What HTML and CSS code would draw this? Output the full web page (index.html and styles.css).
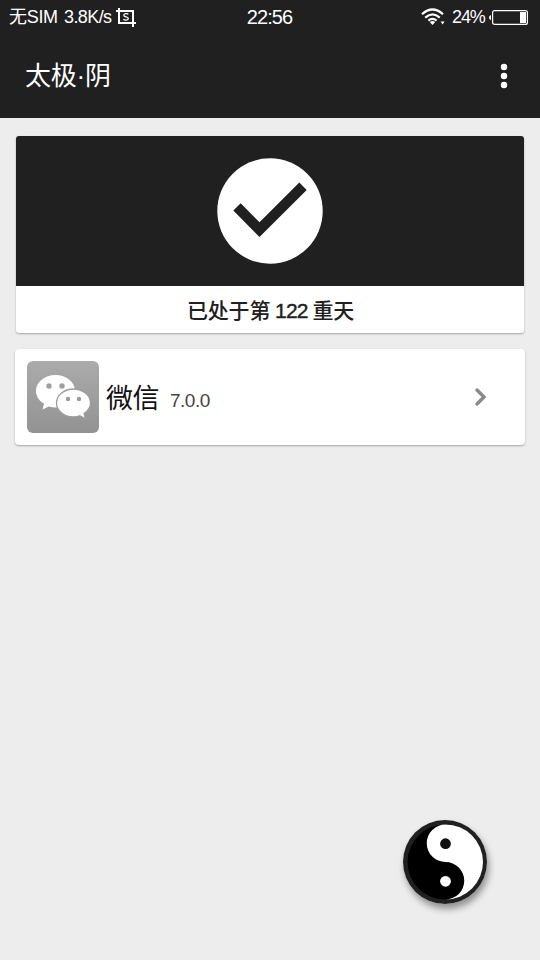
FILE: index.html
```
<!DOCTYPE html>
<html lang="zh-CN">
<head>
<meta charset="utf-8">
<title>太极·阴</title>
<link rel="stylesheet" href="styles.css">
</head>
<body>
<div class="status">
  <div class="status-left">
    <span class="carrier">无SIM</span><span class="speed">3.8K/s</span>
    <svg class="crop" width="20" height="19" viewBox="0 0 20 19" fill="none" stroke="#fff" stroke-width="2"><path d="M0 3H17V19M3 0V15H20"/><path stroke-width="1.3" d="M12.3 6.4C11.5 5.2 7.8 5.2 7.8 7.2C7.8 9.4 12.3 8.3 12.3 10.5C12.3 12.6 8.3 12.5 7.5 11.1"/></svg>
  </div>
  <span class="clock">22:56</span>
  <div class="status-right">
    <svg class="wifi" width="24" height="18" viewBox="0 0 24 18" fill="none" stroke="#fff" stroke-width="2.200"><path d="M1 6.2Q11.5-3.2 22 6.2M4.2 9.6Q11.5 3.2 18.8 9.6M7.4 12.6Q11.5 9.2 15.6 12.6"/><path fill="#fff" stroke="none" d="M8.8 14Q11.5 12.2 14.2 14L11.5 17ZM19.6 13.5h4l-2 3z"/></svg>
    <span class="percent">24%</span>
    <svg class="battery" width="39" height="15" viewBox="0 0 39 15"><path fill="#fff" d="M2 5v5Q0 9.500 0 7.500T2 5zM31 2h6v11h-6z"/><rect x="3.600" y=".6" width="34.800" height="13.800" rx="2" fill="none" stroke="#fff" stroke-width="1.200"/></svg>
  </div>
</div>
<header class="toolbar">
  <h1 class="title">太极·阴</h1>
  <svg width="8" height="26" viewBox="0 0 8 26" fill="#fff"><circle cx="4" cy="4" r="3.200"/><circle cx="4" cy="13" r="3.200"/><circle cx="4" cy="22" r="3.200"/></svg>
</header>
<main class="content">
  <section class="card hero">
    <div class="hero-top">
      <svg width="106" height="106" viewBox="0 0 106 106"><circle cx="53" cy="53" r="52.700" fill="#fff"/><path fill="#202020" d="M16.300 52.500L23.700 45.200L42.500 64.200L82.300 24.500L89.700 32L42.500 79Z"/></svg>
    </div>
    <div class="hero-text">已处于第<span class="count"> 122 </span>重天</div>
  </section>
  <section class="card app">
    <svg class="app-icon" width="72" height="72" viewBox="0 0 72 72">
      <defs><linearGradient id="g" x2="0" y2="1"><stop stop-color="#ababab"/><stop offset="1" stop-color="#929292"/></linearGradient></defs>
      <rect width="72" height="72" rx="6" fill="url(#g)"/>
      <path fill="#fff" d="M28.500 14C39.500 14 48 21 48 30.200S39.500 46.500 28.500 46.500Q25 46.500 21.800 45.500L15.500 48.500L17 42.800C12 39.500 9 35.200 9 30.200C9 21 17.500 14 28.500 14Z"/>
      <circle cx="22" cy="25" r="2.700" fill="#9f9f9f"/><circle cx="35" cy="25" r="2.700" fill="#9f9f9f"/>
      <path fill="#fff" stroke="#9d9d9d" stroke-width="1.300" d="M46.500 28C55.500 28 63.500 34 63.500 42C63.500 46.500 61 49.800 57 52.600L58.600 57.800L52.700 54.800Q49.500 56 46.500 56C37.500 56 29.500 50 29.500 42S37.500 28 46.500 28Z"/>
      <circle cx="41" cy="38" r="2.200" fill="#9b9b9b"/><circle cx="52" cy="38" r="2.200" fill="#9b9b9b"/>
    </svg>
    <span class="app-name">微信</span>
    <span class="app-version">7.0.0</span>
    <svg class="chevron" width="14" height="20" viewBox="0 0 14 20" fill="none" stroke="#8a8a8a" stroke-width="3.400" stroke-linecap="round"><path d="M3 3L10 10L3 17"/></svg>
  </section>
</main>
<div class="fab">
  <svg width="84" height="84" viewBox="0 0 84 84"><circle cx="42" cy="42" r="42" fill="#202020"/><circle cx="42" cy="42" r="37.500" fill="#000"/><path fill="#fff" d="M42.500 4.500A37.500 37.500 0 0 1 42.500 79.500A18.750 18.750 0 0 0 42.500 42A18.750 18.750 0 0 1 42.500 4.500Z"/><circle cx="42.500" cy="23.700" r="5.400" fill="#101010"/><circle cx="42.500" cy="61.300" r="5.400" fill="#fff"/></svg>
</div>
</body>
</html>
```
FILE: styles.css
```
* { box-sizing: border-box; }
body {
  margin: 0;
  width: 540px;
  height: 960px;
  overflow: hidden;
  background: #ededed;
  color: #202020;
  font-family: "Liberation Sans", "Noto Sans CJK SC", sans-serif;
}
svg { display: block; flex: none; }
.status {
  display: grid;
  grid-template-columns: 1fr auto 1fr;
  align-items: center;
  height: 34px;
  padding: 0 12px 0 9px;
  background: #202020;
  color: #fff;
  font-size: 18px;
  line-height: 34px;
  white-space: nowrap;
}
.status-left, .status-right { display: flex; align-items: center; }
.status-right { justify-content: flex-end; }
.carrier { width: 55px; letter-spacing: -0.3px; }
.speed { width: 52px; letter-spacing: -0.6px; }
.clock { font-size: 20px; letter-spacing: -0.9px; margin-left: 2px; }
.wifi { margin-right: 7px; }
.percent { width: 37px; letter-spacing: -1.1px; }
.toolbar {
  display: flex;
  align-items: center;
  justify-content: space-between;
  height: 84px;
  padding: 0 32px 0 25px;
  background: #202020;
  color: #fff;
}
.title { margin: 0; font-size: 26px; line-height: 84px; font-weight: 400; letter-spacing: -0.2px; }
.content { display: flex; flex-direction: column; gap: 16px; padding: 18px 15px; }
.card {
  background: #fff;
  border-radius: 4px;
  box-shadow: 0 1px 2px rgba(0, 0, 0, .3);
}
.hero { margin: 0 1px; height: 197px; overflow: hidden; border-radius: 3px; }
.hero-top { display: flex; align-items: center; justify-content: center; height: 150px; background: #202020; }
.hero-text { height: 47px; padding-left: 1px; line-height: 50px; text-align: center; font-size: 21px; font-weight: 500; letter-spacing: -0.2px; white-space: pre; }
.count { letter-spacing: -0.9px; -webkit-text-stroke: 0.4px #202020; }
.app { display: flex; align-items: center; height: 96px; padding: 0 37px 0 12px; }
.app-name { margin: -2px 0 0 7px; font-size: 27px; letter-spacing: -0.5px; color: #111; }
.app-version { margin: 8px auto 0 11px; font-size: 19px; letter-spacing: -0.5px; color: #444; }
.fab {
  position: absolute;
  left: 403px;
  top: 820px;
  border-radius: 50%;
  box-shadow: 2px 5px 7px rgba(0, 0, 0, .4);
}
```
